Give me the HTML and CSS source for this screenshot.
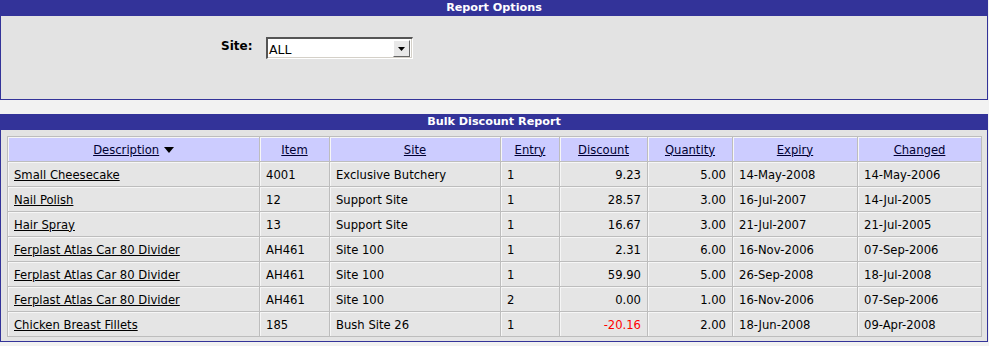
FILE: index.html
```html
<!DOCTYPE html>
<html lang="en">
<head>
<meta charset="UTF-8">
<title>Bulk Discount Report</title>
<link rel="stylesheet" href="styles.css">
</head>
<body>
<!-- Report options -->
<div class="section">
    <div class="section-title">Report Options</div>
    <div class="section-body options">
        <div class="option-row">
            <span class="option-label">Site:</span>
            <div class="fake-select">
                <span class="fake-select-value">ALL</span>
                <span class="fake-select-btn">
                    <svg width="7" height="4" viewBox="0 0 7 4"><path d="M0 0h7L3.5 4z" fill="#000"/></svg>
                </span>
            </div>
        </div>
    </div>
</div>

<!-- Report -->
<div class="section report">
    <div class="section-title">Bulk Discount Report</div>
    <div class="section-body table-wrap">
        <table class="report-table">
            <colgroup>
                <col style="width:252px"><col style="width:70px"><col style="width:171px"><col style="width:59px">
                <col style="width:88px"><col style="width:85px"><col style="width:125px"><col style="width:124px">
            </colgroup>
            <thead>
                <tr>
                    <th><a href="#">Description</a> <svg class="sort" width="10" height="6" viewBox="0 0 10 6"><path d="M0 0h10L5 6z" fill="#000"/></svg></th>
                    <th><a href="#">Item</a></th>
                    <th><a href="#">Site</a></th>
                    <th><a href="#">Entry</a></th>
                    <th><a href="#">Discount</a></th>
                    <th><a href="#">Quantity</a></th>
                    <th><a href="#">Expiry</a></th>
                    <th><a href="#">Changed</a></th>
                </tr>
            </thead>
            <tbody>
                <tr>
                    <td><a href="#">Small Cheesecake</a></td><td>4001</td><td>Exclusive Butchery</td><td>1</td>
                    <td class="num">9.23</td><td class="num">5.00</td><td>14-May-2008</td><td>14-May-2006</td>
                </tr>
                <tr>
                    <td><a href="#">Nail Polish</a></td><td>12</td><td>Support Site</td><td>1</td>
                    <td class="num">28.57</td><td class="num">3.00</td><td>16-Jul-2007</td><td>14-Jul-2005</td>
                </tr>
                <tr>
                    <td><a href="#">Hair Spray</a></td><td>13</td><td>Support Site</td><td>1</td>
                    <td class="num">16.67</td><td class="num">3.00</td><td>21-Jul-2007</td><td>21-Jul-2005</td>
                </tr>
                <tr>
                    <td><a href="#">Ferplast Atlas Car 80 Divider</a></td><td>AH461</td><td>Site 100</td><td>1</td>
                    <td class="num">2.31</td><td class="num">6.00</td><td>16-Nov-2006</td><td>07-Sep-2006</td>
                </tr>
                <tr>
                    <td><a href="#">Ferplast Atlas Car 80 Divider</a></td><td>AH461</td><td>Site 100</td><td>1</td>
                    <td class="num">59.90</td><td class="num">5.00</td><td>26-Sep-2008</td><td>18-Jul-2008</td>
                </tr>
                <tr>
                    <td><a href="#">Ferplast Atlas Car 80 Divider</a></td><td>AH461</td><td>Site 100</td><td>2</td>
                    <td class="num">0.00</td><td class="num">1.00</td><td>16-Nov-2006</td><td>07-Sep-2006</td>
                </tr>
                <tr>
                    <td><a href="#">Chicken Breast Fillets</a></td><td>185</td><td>Bush Site 26</td><td>1</td>
                    <td class="num negative">-20.16</td><td class="num">2.00</td><td>18-Jun-2008</td><td>09-Apr-2008</td>
                </tr>
            </tbody>
        </table>
    </div>
</div>
</body>
</html>
```

FILE: styles.css
```css
body {
    margin: 0;
    background-color: #f2f2f2;
    font-family: "DejaVu Sans", Verdana, sans-serif;
    font-size: 11px;
    color: #000;
}
/* section box */
.section {
    margin-right: 1px;
}
.report {
    margin-top: 14px;
}
.section-title {
    height: 16px;
    line-height: 16px;
    background-color: #333399;
    color: #fff;
    font-weight: bold;
    font-size: 11.2px;
    text-align: center;
}
.section-body {
    background-color: #e3e3e3;
    border: 1px solid #333399;
    border-top: none;
}
/* options */
.options {
    height: 84px;
    box-sizing: border-box;
    padding-top: 21px;
}
.option-row {
    display: flex;
    align-items: flex-start;
    padding-left: 220px;
    gap: 14px;
}
.option-label {
    font-weight: bold;
    font-size: 12px;
    padding-top: 2px;
    width: 31px;
}
.fake-select {
    display: flex;
    align-items: center;
    width: 147px;
    height: 22px;
    box-sizing: border-box;
    background: #fff;
    border-top: 2px solid #555;
    border-left: 2px solid #555;
    border-right: 1px solid #fff;
    border-bottom: 1px solid #fff;
    box-shadow: inset -1px -1px 0 #d4d0c8;
}
.fake-select-value {
    flex: 1;
    padding-left: 1px;
    padding-top: 2px;
    font-family: "DejaVu Sans", Tahoma, sans-serif;
    font-size: 12.5px;
}
.fake-select-btn {
    display: flex;
    justify-content: center;
    align-items: center;
    width: 15px;
    height: 15px;
    margin-right: 2px;
    background: #e8e8e8;
    border-top: 1px solid #fff;
    border-left: 1px solid #fff;
    border-right: 1px solid #666;
    border-bottom: 1px solid #666;
}
/* report table */
.table-wrap {
    padding: 6px 6px 4px;
}
.report-table {
    width: 974px;
    table-layout: fixed;
    border-collapse: collapse;
    font-size: 11.6px;
    line-height: 14px;
}
.report-table th,
.report-table td {
    height: 25px;
    box-sizing: border-box;
    padding: 1px 6px 0;
    border: 1px solid #bdbdbd;
    box-shadow: inset 1px 1px 0 #f6f6f6;
    white-space: nowrap;
    overflow: hidden;
}
.report-table th {
    background-color: #ccccff;
    font-weight: normal;
    text-align: center;
}
.report-table td {
    background-color: #e5e5e5;
}
.report-table a {
    color: #000;
}
.report-table th a {
    color: #000033;
}
.sort {
    vertical-align: middle;
    margin-left: 1px;
}
.num {
    text-align: right;
}
.negative {
    color: #f00;
}
```
